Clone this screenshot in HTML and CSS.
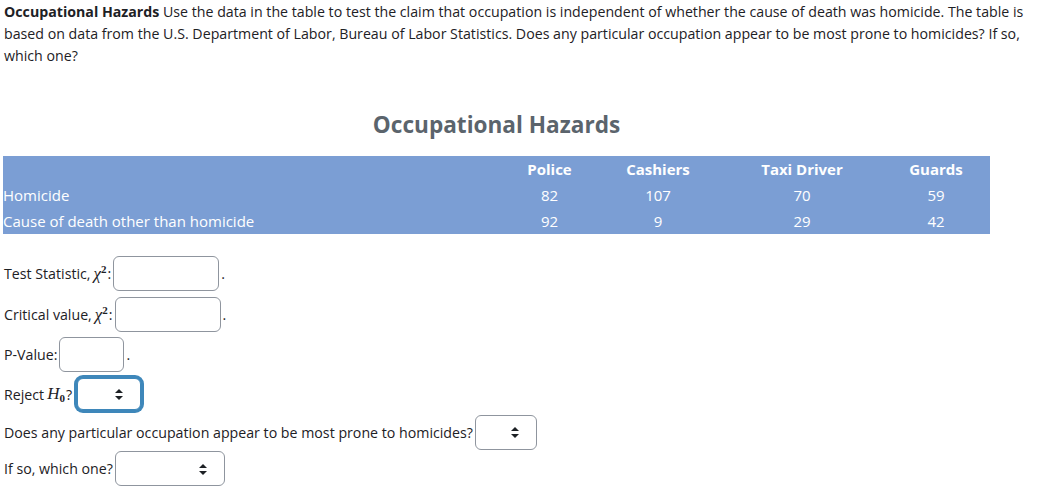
FILE: index.html
```html
<!DOCTYPE html>
<html>
<head>
<meta charset="utf-8">
<link rel="stylesheet" href="styles.css">
</head>
<body>
<p class="intro"><b>Occupational Hazards</b> Use the data in the table to test the claim that occupation is independent of whether the cause of death was homicide. The table is based on data from the U.S. Department of Labor, Bureau of Labor Statistics. Does any particular occupation appear to be most prone to homicides? If so, which one?</p>

<table class="data">
  <caption>Occupational Hazards</caption>
  <thead>
    <tr><th class="c-label"></th><th class="c-police">Police</th><th class="c-cash">Cashiers</th><th class="c-taxi">Taxi Driver</th><th class="c-guard">Guards</th></tr>
  </thead>
  <tbody>
    <tr><td class="label">Homicide</td><td>82</td><td>107</td><td>70</td><td>59</td></tr>
    <tr><td class="label">Cause of death other than homicide</td><td>92</td><td>9</td><td>29</td><td>42</td></tr>
  </tbody>
</table>

<div class="form">
  <div class="row r1">Test Statistic, <span class="math">χ<sup>2</sup></span>:<span class="field w105"></span>.</div>
  <div class="row r2">Critical value, <span class="math">χ<sup>2</sup></span>:<span class="field w105"></span>.</div>
  <div class="row r3">P-Value:<span class="field w64"></span>.</div>
  <div class="row r4">Reject <span class="math">H<sub>0</sub></span>?<span class="field sel focus w66"><span class="arrows"></span></span></div>
  <div class="row r5">Does any particular occupation appear to be most prone to homicides?<span class="field sel w62"><span class="arrows"></span></span></div>
  <div class="row r6">If so, which one?<span class="field sel w110"><span class="arrows"></span></span></div>
</div>
</body>
</html>
```
FILE: styles.css
```css
body {
  margin: 0;
  padding: 0 3px;
  font-family: "Open Sans", "Noto Sans", sans-serif;
  font-size: 14.2px;
  color: #1d2125;
  background: #fff;
}
.intro {
  margin: 1px 0 0 1px;
  line-height: 22px;
  width: 1036px;
}
.intro b { font-weight: 700; }

.data {
  border-collapse: collapse;
  width: 987px;
  margin-top: 43px;
  background: #7b9ed4;
  color: #fff;
  table-layout: fixed;
  font-size: 15px;
}
.data caption {
  font-size: 22.6px;
  font-weight: 700;
  color: #5b646c;
  padding-bottom: 16px;
  line-height: 30px;
}
.data th, .data td {
  padding: 0;
  height: 26px;
  text-align: center;
  font-weight: 400;
}
.data th { font-weight: 700; }
.data td.label { text-align: left; }
.c-label { width: 502px; }
.c-police { width: 89px; }
.c-cash { width: 128px; }
.c-taxi { width: 160px; }
.c-guard { width: 108px; }

.form { margin-top: 22px; padding-left: 1px; }
.row {
  display: flex;
  align-items: center;
  height: 35px;
}
.r1 { margin-top: 0; }
.r2 { margin-top: 6px; }
.r3 { margin-top: 5px; }
.r4 { margin-top: 3px; height: 38px; }
.r5 { margin-top: 1px; height: 36px; }
.r6 { margin-top: 1px; }
.math {
  font-family: "Liberation Serif", "DejaVu Serif", serif;
  font-style: italic;
  font-size: 17px;
  margin: 0 1px 0 3px;
}
.math sup { font-style: normal; font-size: 11px; font-weight: 700; vertical-align: 6px; }
.math sub { font-style: normal; font-size: 11px; font-weight: 700; vertical-align: -3px; }
.field {
  display: inline-block;
  box-sizing: border-box;
  height: 35px;
  border: 1px solid #8f959e;
  border-radius: 6px;
  margin: 0 2px 0 2px;
  position: relative;
  background: #fff;
}
.w105 { width: 106px; }
.w64 { width: 65px; }
.w66 { width: 64px; }
.w62 { width: 62px; }
.w110 { width: 110px; }
.focus {
  height: 32px;
  border: 1px solid #3e87ba;
  box-shadow: 0 0 0 3px #3e87ba;
  margin-left: 5px;
}
.arrows {
  position: absolute;
  right: 17px;
  top: 50%;
  width: 8px;
  height: 11px;
  margin-top: -5px;
}
.arrows::before, .arrows::after {
  content: "";
  position: absolute;
  left: 0;
  border-left: 4px solid transparent;
  border-right: 4px solid transparent;
}
.arrows::before { top: 0; border-bottom: 4px solid #1d2125; }
.arrows::after { bottom: 0; border-top: 4px solid #1d2125; }
```
